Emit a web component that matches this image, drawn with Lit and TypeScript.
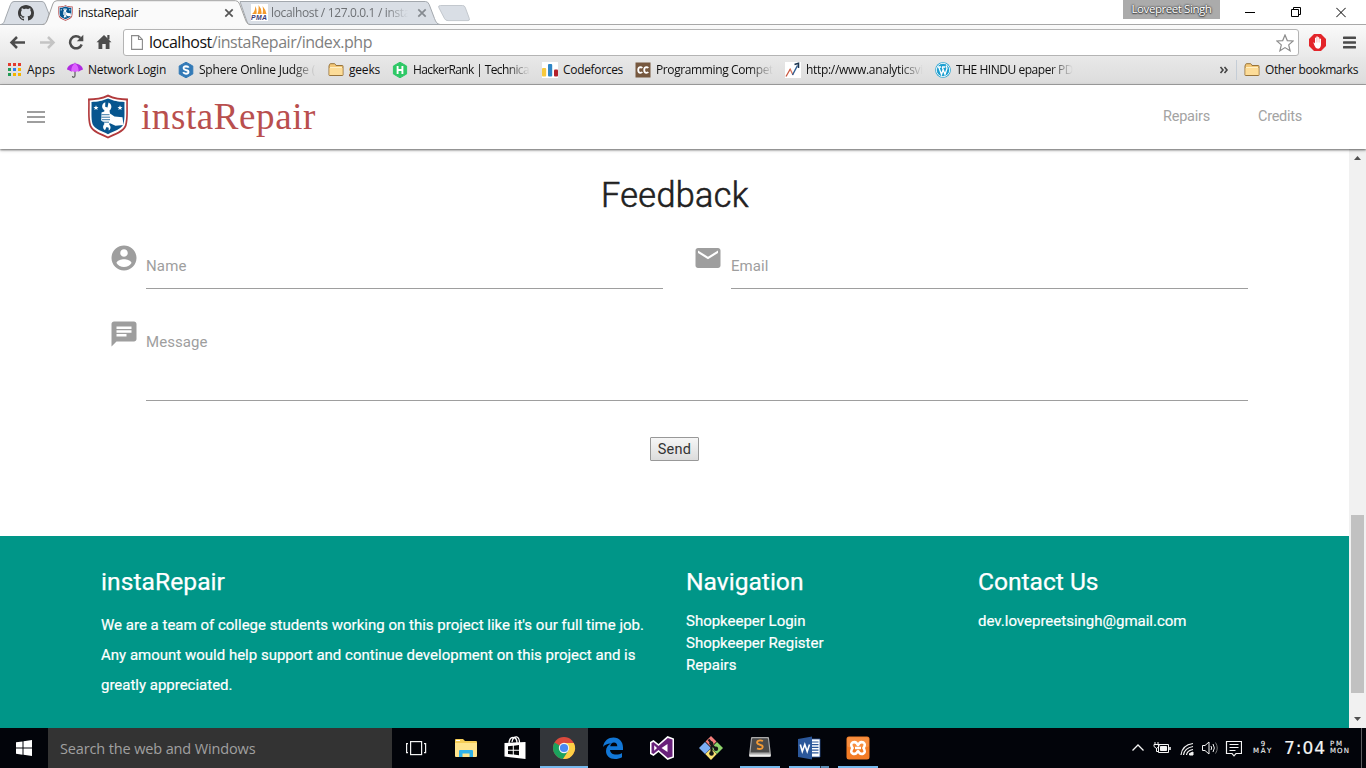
import { LitElement, html, css, svg } from "lit";
import { customElement, property, query } from "lit/decorators.js";

/** A single line of text whose tracking is adjusted to fill a given width. */
@customElement("fit-text")
class FitText extends LitElement {
  @property({ type: Number }) w = 0;
  @query("span") label!: HTMLSpanElement;
  static styles = css`
    :host { display: inline-block; white-space: nowrap; }
    span { display: inline-block; }
  `;
  render() {
    return html`<span><slot></slot></span>`;
  }
  firstUpdated() {
    const chars = (this.textContent ?? "").trim().length;
    const natural = this.label.getBoundingClientRect().width;
    if (chars > 0 && this.w > 0) {
      this.label.style.letterSpacing = `${(this.w - natural) / chars}px`;
    }
  }
}

const shield = (size: number, h: number) => html`
  <svg width=${size} height=${h} viewBox="0 0 42 45" preserveAspectRatio="none">
    <path d="M21 .5C27 3.500 34 4.500 41 4.500C40.500 14 41.800 24 39.500 32C37 38.500 28 41 21 44.500C14 41 5 38.500 2.500 32C.2 24 1.500 14 1 4.500C8 4.500 15 3.500 21 .5Z" fill="#b23a3c"/>
    <path d="M21 2.800C27 5.500 33 6.200 39.300 6.400C39 15 40 24 37.900 31.200C35.500 36.800 28 39 21 42.400C14 39 6.500 36.800 4.100 31.200C2 24 3 15 2.700 6.400C9 6.200 15 5.500 21 2.800Z" fill="#fff"/>
    <path d="M21 4.500C27 7 31 7.700 37.500 8C37.200 16 38.200 24 36.400 30.300C34 35.500 27 37 21 40.200C15 37 8 35.500 5.600 30.300C3.800 24 4.800 16 4.500 8C11 7.700 15 7 21 4.500Z" fill="#07568f"/>
    <path d="M16.500 9.200L18.300 8.200L18.200 12.800L20.500 13.600L21.500 8.500C25 10 25.300 14.500 22.500 16.500L23 19.500L27.500 22.500L35.500 23.300L36.500 31L28.500 31.800L22.500 29L22.200 30.500C24 32 24.200 35.500 21.700 36.500V33.800L19.500 33L18 36.300C15.500 34.500 15.800 31.500 17.300 30.300L17.100 28.500L14.200 26.500L14.500 18.500L17.300 17.500V16C14.500 14.500 14.700 10.800 16.500 9.200Z" fill="#fff"/>
    <path d="M14.500 20.700H22.500M14.500 23.200H23M15 25.700H23M16 28.200H22" stroke="#07568f" stroke-width=".8"/>
    <path d="M9 11.300L9.700 13H11.500L10.100 14.200L10.600 16L9 15L7.400 16L7.900 14.200L6.500 13H8.300Z M33 11.300L33.700 13H35.500L34.100 14.200L34.600 16L33 15L31.400 16L31.900 14.200L30.500 13H32.300Z" fill="#fff"/>
  </svg>`;

const tabShapes = html`
  <svg class="tabshapes" width="1366" height="25" viewBox="0 0 1366 25">
    <path d="M0 24.500H1366" stroke="#a8a8a8"/>
    <path d="M1 24.500C4 24 4.500 21 5.500 18L10.500 4.500Q11.700 1.500 14 1.500H42Q44 1.500 45 4L49 14L46 24.500Z" fill="#d9dee5" stroke="#a3a8ae"/>
    <path d="M240 1.500H425.500Q428 1.500 429.200 4.500L434.500 18.500C435.800 22 437 24 440 24.500H248Z" fill="#d9dee5" stroke="#a3a8ae"/>
    <path d="M42.500 25C46 24.500 46.800 21.500 48 18L52.800 4Q53.800 .7 57 .7H235.500Q238.300 .7 239.600 4L245 18.500C246.300 22 247 24.300 250.500 25Z" fill="#fafafa"/>
    <path d="M42.500 24.500C46 24.200 46.800 21.500 48 18L52.800 4Q53.800 .7 57 .7H235.500Q238.300 .7 239.600 4L245 18.500C246.300 22 247 24.300 250.500 24.500" fill="none" stroke="#a0a0a0"/>
    <path d="M440.500 5.500H462.500Q464.500 5.500 465.200 7.300L469.300 18.500Q470 20.600 468 20.600H448Q445.500 20.600 444.600 18.700L438.800 7.500Q438 5.500 440.500 5.500Z" fill="#d9dee5" stroke="#c3c8ce"/>
  </svg>`;

const cross = (color: string) => html`
  <svg width="10" height="10" viewBox="0 0 10 10"><path d="M1.300 1.300L8.700 8.700M8.700 1.300L1.300 8.700" stroke=${color} stroke-width="1.700"/></svg>`;

const github = html`
  <svg width="16" height="16" viewBox="0 0 16 16"><path fill="#3c3c3c" d="M8 0C3.580 0 0 3.580 0 8c0 3.540 2.290 6.530 5.470 7.590.4.070.55-.17.55-.38 0-.19-.01-.82-.01-1.490-2.010.37-2.530-.49-2.690-.94-.09-.23-.48-.94-.82-1.130-.28-.15-.68-.52-.01-.53.63-.01 1.080.58 1.230.82.72 1.210 1.870.87 2.330.66.070-.52.28-.87.51-1.070-1.780-.2-3.640-.89-3.640-3.950 0-.87.31-1.590.82-2.150-.08-.2-.36-1.020.08-2.120 0 0 .67-.21 2.200.82.64-.18 1.320-.27 2-.27s1.360.09 2 .27c1.530-1.040 2.200-.82 2.200-.82.44 1.100.16 1.920.08 2.120.51.56.82 1.270.82 2.150 0 3.070-1.870 3.750-3.650 3.950.29.25.54.73.54 1.480 0 1.070-.01 1.930-.01 2.200 0 .21.15.46.55.38A8.010 8.010 0 0 0 16 8c0-4.420-3.580-8-8-8z"/></svg>`;

const folder = html`
  <svg width="16" height="16" viewBox="0 0 16 16">
    <path d="M1 4V13Q1 13.500 1.500 13.500H14.500Q15 13.500 15 13V4.200Q15 3.500 14.500 3.500H8L7.300 2.200Q7 1.700 6.500 1.700H2.500Q1.800 1.700 1.700 2.300Z" fill="#f4c878" stroke="#97733a"/>
    <path d="M1.500 6H14.500V13H1.500Z" fill="#fcdc98"/><path d="M2 5.500H14" stroke="#fff0c4"/>
  </svg>`;

const bmIcons: Record<string, unknown> = {
  apps: html`<svg width="16" height="16" viewBox="0 0 16 16">
    <g fill="#e33b2e"><path d="M2 1h3v3H2zM7 1h3v3H7zM12 1h3v3h-3z"/></g>
    <path fill="#239b56" d="M2 6h3v3H2zM2 11h3v3H2z"/><path fill="#2d7ff0" d="M7 6h3v3H7z"/>
    <path fill="#f4b400" d="M12 6h3v3h-3zM7 11h3v3H7zM12 11h3v3h-3z"/></svg>`,
  umbrella: html`<svg width="16" height="16" viewBox="0 0 16 16">
    <path d="M8 7V13.500Q8 15.300 6.500 15.300Q5.500 15.200 5.500 14" stroke="#666" stroke-width="1.300" fill="none"/>
    <path d="M0 7.500C.5 4 3.500 2 7.500 1.500L8 .3L8.500 1.500C12.500 2 15.500 4 16 7.500L13.500 8.500L11.800 9.500L10 9L8 10L6 9L4.200 9.500L2.500 8.500Z" fill="#b02be0"/>
    <path d="M4.200 9.500C4.500 4.500 6 2.500 8 1.500C10 2.500 11.500 4.500 11.800 9.500L10 9L8 10L6 9Z" fill="#dd62ff"/></svg>`,
  sphere: html`<svg width="16" height="16" viewBox="0 0 16 16"><path d="M8 .2L14.800 4V12L8 15.800L1.200 12V4Z" fill="#337ab7" stroke="#337ab7" stroke-linejoin="round"/>
    <path d="M10.700 5.600Q10 4.300 8 4.300Q5.500 4.400 5.600 6.200Q5.700 7.500 8 8Q10.600 8.500 10.500 10Q10.400 11.700 8 11.700Q5.900 11.700 5.200 10.200" fill="none" stroke="#fff" stroke-width="1.900"/></svg>`,
  folder,
  hacker: html`<svg width="16" height="16" viewBox="0 0 16 16"><path d="M8 .2L14.600 4V12L8 15.800L1.400 12V4Z" fill="#2ec866" stroke="#2ec866" stroke-linejoin="round"/>
    <path d="M5.600 4V12M10.400 4V12M5.600 8H10.400" stroke="#fff" stroke-width="1.900"/></svg>`,
  forces: html`<svg width="16" height="16" viewBox="0 0 16 16"><path d="M0 0H16V16H0Z" fill="#fff"/><rect x="0" y="6" width="4.200" height="8.500" rx="1" fill="#f8c93c"/><rect x="6" y="2" width="4.200" height="12.500" rx="1" fill="#2f86c6"/><rect x="12" y="7.500" width="4" height="7" rx="1" fill="#b3202a"/></svg>`,
  chef: html`<svg width="16" height="16" viewBox="0 0 16 16"><path d="M.5 .5H15.500V15.500H.5Z" fill="#76583f"/><path d="M7.300 6Q6.600 5.200 5.400 5.200Q3.200 5.300 3.200 8Q3.200 10.700 5.400 10.800Q6.600 10.800 7.300 10M13.300 6Q12.600 5.200 11.400 5.200Q9.200 5.300 9.200 8Q9.200 10.700 11.400 10.800Q12.600 10.800 13.300 10" stroke="#fff" stroke-width="1.800" fill="none"/></svg>`,
  chart: html`<svg width="16" height="16" viewBox="0 0 16 16"><path d="M0 0H16V16H0Z" fill="#fff"/><path d="M1 14.500L5 7.500" stroke="#c9573f" stroke-width="1.300" fill="none"/><path d="M4.500 8L5.200 7.200L8 13" stroke="#d4705a" stroke-width="1.300" fill="none"/><path d="M7.500 13L12.500 3.500" stroke="#2c5b90" stroke-width="1.400" fill="none"/><path d="M9.500 2.500L13.500 1.200V6" stroke="#1c3550" stroke-width="1.500" fill="none"/></svg>`,
  wordpress: html`<svg width="16" height="16" viewBox="0 0 16 16"><circle cx="8" cy="8" r="7.800" fill="#1d9fd0"/><circle cx="8" cy="8" r="6.700" fill="none" stroke="#fff" stroke-width=".9"/><path d="M2.500 5H6M7 5H10.300M3.700 5L6.500 12.500L8.200 7.500M7.200 5L10 12.500L12 6.500Q11.800 4.500 11 3.500" stroke="#fff" stroke-width="1.300" fill="none"/></svg>`,
};

const bookmarks = [
  { icon: "apps", text: "Apps", w: 28, box: 28 },
  { icon: "umbrella", text: "Network Login", w: 78, box: 78 },
  { icon: "sphere", text: "Sphere Online Judge (", w: 116, box: 117, fade: true },
  { icon: "folder", text: "geeks", w: 31, box: 31 },
  { icon: "hacker", text: "HackerRank | Technica", w: 116, box: 117, fade: true },
  { icon: "forces", text: "Codeforces", w: 60, box: 60 },
  { icon: "chef", text: "Programming Compet", w: 117, box: 117, fade: true },
  { icon: "chart", text: "http://www.analyticsvi", w: 117, box: 117, fade: true },
  { icon: "wordpress", text: "THE HINDU epaper PD", w: 117, box: 117, fade: true },
];

const taskIcons = [
  { run: "", art: svg`<g fill="none" stroke="#f2f2f2" stroke-width="1.200"><rect x="9.600" y="9.600" width="11" height="13"/><path d="M7 11.600H5.600V20.600H7M23 11.600H24.600V20.600H23"/></g>` },
  { run: "", art: svg`<path d="M4 8Q4 7 5 7H12L14 9H25Q26 9 26 10V24H4Z" fill="#f5cd57"/><path d="M4 11H26V24Q26 25 25 25H5Q4 25 4 24Z" fill="#ffe48d"/><path d="M8 25V19Q8 18 9 18H21Q22 18 22 19V25H18.500V21.500H11.500V25Z" fill="#2fb1e8"/><path d="M5 8.500H9" stroke="#fff" stroke-width="1"/>` },
  { run: "", art: svg`<path d="M4.500 11L25.500 10V27L4.500 24.500Z" fill="#fff"/><path d="M9 12Q9 5.500 13 5.500Q17 5.500 17 11M12 10Q13 4.500 17 5Q19.500 6 19.500 11" fill="none" stroke="#fff" stroke-width="1.300"/><path d="M8 14.300L12.800 13.800V17.800H8ZM13.800 13.700L19 13.100V17.800H13.800ZM8 18.800H12.800V22.500L8 22ZM13.800 18.800H19V23.300L13.800 22.600Z" fill="#050608"/>` },
  { run: "full", art: svg`<circle cx="15" cy="16" r="11" fill="#db4a3d"/><path d="M15 16L5.500 10.500A11 11 0 0 0 14 27L19.700 18.700Z" fill="#1ba25d"/><path d="M15 11H24.800A11 11 0 0 1 14 27L19.500 18.500Z" fill="#fdcf45"/><circle cx="15" cy="16" r="5.200" fill="#f4f4f4"/><circle cx="15" cy="16" r="4.100" fill="#4a89f3"/>` },
  { run: "", art: svg`<path d="M5 15C6 8.500 10.500 5.500 15.500 5.500C21.500 5.500 25 10 25 15.500V18H12C12.300 21 15 22.600 18 22.600C20.500 22.600 22.500 22 24 21V25.200C22 26.400 19.500 27 17 27C11.500 27 8 23.500 8 19C8 15.500 10 12.800 13 11.500C9.500 11.500 6.500 13 5 15ZM12.200 14.200H19.300C19.300 12 18 10.500 16 10.500C14 10.500 12.600 12 12.200 14.200Z" fill="#1277d6"/>` },
  { run: "", art: svg`<path d="M3 10L6.500 8L11.500 12L20.500 4L27 6.500V25.500L20.500 28L11.500 20L6.500 24L3 22Z" fill="#fff"/><path d="M4.500 11L6.500 10L11.500 14L20.800 6L25.500 7.500V24.500L20.800 26L11.500 18L6.500 22L4.500 21Z" fill="#68217a"/><path d="M7.200 13.200L10 16L7.200 18.800ZM20.500 12V20L14.500 16Z" fill="#fff"/>` },
  { run: "", art: svg`<path d="M15 4L20.500 9.500L15 15L9.500 9.500Z" fill="#f57e7b"/><path d="M21 10L27 16L21 22L15 16Z" fill="#8ed36a"/><path d="M15 16.500L20.800 22L15 28L9.200 22Z" fill="#fbe272"/><path d="M9 10L15 16L9 22L3 16Z" fill="#7caef5"/><path d="M12.500 7.500L15.500 11V22M15.500 12.500L20 17" stroke="#161616" stroke-width="2.100" fill="none"/><circle cx="15.300" cy="11.300" r="2" fill="#161616"/><circle cx="20" cy="16.700" r="2.200" fill="#161616"/><circle cx="15.500" cy="21.500" r="2.300" fill="#161616"/>` },
  { run: "on", art: svg`<path d="M6 6Q6 5 7 5H23Q24 5 24 6L26 23Q26 25 24.500 25H5.500Q4 25 4 23Z" fill="#aaa"/><path d="M7 7Q7 6.200 8 6.200H22Q23 6.200 23 7L24.500 20.500H5.500Z" fill="#4b4b4b"/><path d="M4.300 22.500H25.700L25.500 24.500H4.500Z" fill="#eee"/><path d="M18 9Q15 7.700 12.800 9Q11.300 10.700 13 12L17 13.500Q18.500 15 16.800 16.500Q14.500 17.600 12 16.300" stroke="#f49b35" stroke-width="1.900" fill="none"/>` },
  { run: "on word", art: svg`<path d="M16 7H26V25H16Z" fill="#fff" stroke="#2b579a" stroke-width=".8"/><path d="M17 10H24.500M17 12.700H24.500M17 15.400H24.500M17 18.100H24.500M17 20.800H24.500" stroke="#2b579a" stroke-width="1.200"/><path d="M4 7L18 4.500V27.500L4 25Z" fill="#2b579a"/><path d="M6.300 12.500L8.300 19.500L10.800 12.500L13.200 19.500L15.500 12.500" stroke="#fff" stroke-width="1.600" fill="none"/>` },
  { run: "on", art: svg`<rect x="3.500" y="4.500" width="23" height="23" rx="2.500" fill="#f47c25"/><rect x="4.200" y="5.200" width="21.600" height="10" rx="2" fill="#f88f40"/><path d="M9.500 10.500Q12 9.500 13.500 11Q14.500 13 15 13Q15.500 13 16.500 11Q18 9.500 20.500 10.500Q23 12 20.500 16Q23 20 20.500 21.500Q18 22.500 16.500 21Q15.500 19 15 19Q14.500 19 13.500 21Q12 22.500 9.500 21.500Q7 20 9.500 16Q7 12 9.500 10.500ZM12 16H18" fill="none" stroke="#fff" stroke-width="2.600"/>` },
];

@customElement("app-root")
class AppRoot extends LitElement {
  static styles = css`
    :host { display: flex; flex-direction: column; width: 1366px; height: 768px; overflow: hidden; background: #fff; font-family: Roboto, "Liberation Sans", sans-serif; }
    * { box-sizing: border-box; }
    svg { display: block; flex: none; }
    .chrome { font-family: "Open Sans", "Noto Sans", sans-serif; height: 85px; flex: none; display: flex; flex-direction: column; color: #111; font-size: 12px; }
    .tabs { position: relative; height: 25px; flex: none; display: flex; align-items: center; background: #fff; }
    .tabshapes { position: absolute; left: 0; top: 0; }
    .tab { position: relative; display: flex; align-items: center; height: 25px; }
    .gh { width: 58px; padding-left: 18px; }
    .active { width: 193px; gap: 5px; }
    .active .title { flex: 1; }
    .active .x { margin-right: 17px; display: flex; }
    .second { width: 190px; color: #6e7175; gap: 3px; }
    .second .title { width: 140px; overflow: hidden; -webkit-mask-image: linear-gradient(90deg, #000 82%, transparent 98%); mask-image: linear-gradient(90deg, #000 82%, transparent 98%); }
    .second .x { margin-left: 3px; display: flex; }
    .pma { width: 17px; height: 17px; }
    .user { position: relative; margin-left: auto; width: 97px; height: 19px; align-self: flex-start; background: #ababab; color: #fff; text-align: center; line-height: 18px; font-size: 11.500px; text-shadow: 0 0 2px #333, 0 0 2px #444, 0 1px 1px #555; }
    .winctl { display: flex; gap: 35.500px; margin: 0 20px 0 25px; position: relative; width: 101px; }
    .toolbar { height: 32px; flex: none; display: flex; align-items: center; background: linear-gradient(#fafafa, #e9e9e9); }
    .tools { width: 123px; display: flex; padding: 2px 0 0 9px; gap: 13px; align-items: center; }
    .tools svg:nth-child(n+3) { margin-left: -1px; }
    .omni { width: 1176px; height: 27px; margin-top: 3px; background: #fff; border: 1px solid #b4b4b4; border-radius: 3px; display: flex; align-items: center; padding: 0 4px 0 7px; }
    .url { flex: 1; margin-left: 6px; font-size: 16px; line-height: 24px; color: #808080; margin-top: -1px; }
    .url b { font-weight: 400; color: #111; }
    .ext { display: flex; gap: 17px; margin: 2px 0 0 10px; align-items: center; }
    .marks { height: 28px; flex: none; background: linear-gradient(#e8e8e8, #dcdcdc); border-bottom: 1px solid #a5a5a5; display: flex; align-items: center; padding: 0 8px 2px 6px; gap: 12px; }
    .mark { display: flex; align-items: center; gap: 5px; line-height: 20px; }
    .mtext { overflow: hidden; white-space: nowrap; height: 20px; }
    .fade { -webkit-mask-image: linear-gradient(90deg, #000 80%, transparent 100%); mask-image: linear-gradient(90deg, #000 80%, transparent 100%); }
    .other { margin-left: auto; display: flex; align-items: center; gap: 7px; }
    .sep { width: 1px; height: 20px; background: #c5cdd6; }

    .nav { position: relative; height: 64px; flex: none; background: #fff; box-shadow: 0 1px 2px rgba(0,0,0,.5), 0 1px 4px rgba(0,0,0,.2); display: flex; align-items: center; padding-left: 24px; z-index: 2; }
    .shield { margin: -2px 0 0 39px; }
    .brand { font-family: "Liberation Serif", serif; font-size: 37px; color: #b94f4e; margin: 0 0 0 12px; line-height: 64px; }
    .links { margin-left: auto; margin-right: 64px; display: flex; gap: 48px; font-size: 14.500px; color: #a3a3a3; padding-bottom: 1px; }

    .view { flex: 1; display: flex; min-height: 0; }
    .page { width: 1349px; display: flex; flex-direction: column; }
    .form { height: 387px; flex: none; padding: 26px 101px 0 109px; display: flex; flex-direction: column; }
    h4 { margin: 0; font-weight: 300; font-size: 34.200px; line-height: 40px; color: #212121; text-align: center; width: 1132px; height: 68px; -webkit-text-stroke: .6px #212121; }
    .row { display: grid; grid-template-columns: 554px 555px; gap: 30px; }
    .field { display: flex; gap: 7px; height: 46px; }
    .mail { gap: 8px; }
    .line { flex: 1; border-bottom: 1px solid #9e9e9e; font-size: 15px; color: #9e9e9e; line-height: 20px; padding-top: 13px; }
    .msg { height: 82px; margin: 30px 0 36px; width: 1139px; }
    .send { width: 49px; height: 24px; margin-left: 541px; border: 1px solid #989898; border-radius: 1px; background: linear-gradient(#f6f6f6, #dcdcdc); font-size: 14.500px; line-height: 23px; color: #333; text-align: center; }
    .footer { flex: 1; background: #009688; color: #fff; padding: 29px 101px 0; display: grid; grid-template-columns: 585px 292px 1fr; }
    h5 { margin: 0; font-size: 24.600px; font-weight: 400; line-height: 33px; height: 32px; -webkit-text-stroke: .25px #fff; }
    .about { line-height: 30px; font-size: 15px; margin-top: 13px; -webkit-text-stroke: .2px #fff; }
    .list { line-height: 22px; font-size: 15px; margin-top: 13px; -webkit-text-stroke: .2px #fff; }
    .about div, .list div { white-space: nowrap; }
    .scroll { width: 17px; background: #f1f1f1; display: flex; flex-direction: column; align-items: center; padding: 6px 0 5px; }
    .thumb { width: 13px; height: 178px; background: #c1c1c1; margin: 354px 0 auto; }

    .task { height: 40px; flex: none; background: #02040a; display: flex; align-items: stretch; }
    .start { width: 48px; display: grid; place-items: center; }
    .search { width: 344px; background: #333; color: #a0a0a0; font-family: "Open Sans", "Noto Sans", sans-serif; font-size: 14.500px; line-height: 41px; padding-left: 12px; }
    .apps { display: flex; gap: 1px; }
    .app { width: 48px; height: 40px; padding-top: 4px; display: flex; flex-direction: column; align-items: center; justify-content: space-between; }
    .app:first-child { margin-right: 1px; }
    .full { background: #33363a; }
    .bar { height: 2px; width: 40px; }
    .full .bar { width: 48px; background: #76b9ed; }
    .on .bar { background: #76b9ed; }
    .word .bar { background: linear-gradient(90deg, #76b9ed 31px, #24394b 31px, #24394b 32px, #5b8eb6 32px); }
    .tray { margin-left: auto; display: flex; align-items: center; color: #f4f4f4; }
    .tiny { font-family: "DejaVu Sans", sans-serif; font-size: 7px; line-height: 7.500px; display: flex; flex-direction: column; align-items: center; -webkit-text-stroke: .1px #f4f4f4; }
    .date { margin: 0 11px; }
    .left { align-items: flex-start; margin-left: 4px; }
    .clock { font-family: "DejaVu Sans", sans-serif; font-size: 17px; line-height: 20px; -webkit-text-stroke: .2px #f4f4f4; }
    .desk { width: 1px; height: 40px; background: #5c5d60; margin: 0 4px 0 11px; }
  `;

  render() {
    return html`
      <div class="chrome">
        <div class="tabs">
          ${tabShapes}
          <div class="tab gh">${github}</div>
          <div class="tab active">
            ${shield(15, 16)}
            <div class="title"><fit-text w="60">instaRepair</fit-text></div>
            <div class="x">${cross("#555")}</div>
          </div>
          <div class="tab second">
            <svg class="pma" viewBox="0 0 17 17"><path d="M0 0H17V17H0Z" fill="#fff"/><path d="M1 10Q4 8 4.500 2Q6 6 5.500 10ZM6.500 10Q8 6 7.500 1Q11 5 10.500 10ZM11.500 10Q12.500 6 11.500 2Q15 6 15.500 10Z" fill="#f39a2b"/><text x="0" y="16.300" font-family="Liberation Sans" font-size="6.800" font-weight="700" font-style="italic" fill="#3b3b78" textLength="16">PMA</text></svg>
            <div class="title"><fit-text w="139">localhost / 127.0.0.1 / insta</fit-text></div>
            <div class="x">${cross("#858a90")}</div>
          </div>
          <div class="user"><fit-text w="80">Lovepreet Singh</fit-text></div>
          <div class="winctl">
            <svg width="10" height="11" viewBox="0 0 10 11"><path d="M0 5.500H10" stroke="#000"/></svg>
            <svg width="10" height="11" viewBox="0 0 10 11"><path d="M.5 2.500H7.500V9.500H.5ZM2.500 2.500V.5H9.500V7.500H7.500" fill="none" stroke="#000"/></svg>
            <svg width="10" height="11" viewBox="0 0 10 11"><path d="M.3 .8L9.700 10.200M9.700 .8L.3 10.200" stroke="#000"/></svg>
          </div>
        </div>
        <div class="toolbar">
          <div class="tools">
            <svg width="17" height="16" viewBox="0 0 17 16"><path d="M2 8.500H16M8 3L2.500 8.500L8 14" fill="none" stroke="#4d4d4d" stroke-width="2.500"/></svg>
            <svg width="17" height="16" viewBox="0 0 17 16"><path d="M1 8.500H14.500M9 3L14.500 8.500L9 14" fill="none" stroke="#c4c4c4" stroke-width="2.500"/></svg>
            <svg width="16" height="16" viewBox="0 0 16 16"><path d="M13.700 10.500A6 6 0 1 1 12.300 4" fill="none" stroke="#4d4d4d" stroke-width="2.500"/><path d="M15.300 .8V7.300H8.800Z" fill="#4d4d4d"/></svg>
            <svg width="16" height="16" viewBox="0 0 16 16"><path d="M8 1L15.500 8.300H13.500V15H9.700V10H6.300V15H2.500V8.300H.5Z" fill="#4d4d4d"/><path d="M11.300 1H13.500V5.500H11.300Z" fill="#4d4d4d"/></svg>
          </div>
          <div class="omni">
            <svg width="12" height="15" viewBox="0 0 12 15"><path d="M.6 .6H7.500L11.400 4.500V14.400H.6ZM7.500 .6V4.500H11.400" fill="#fff" stroke="#8a8a8a" stroke-width="1.100"/></svg>
            <div class="url"><fit-text w="223"><b>localhost</b>/instaRepair/index.php</fit-text></div>
            <svg width="18" height="18" viewBox="0 0 18 18"><path d="M9 1L11.300 6.600L17.200 7L12.700 10.900L14.100 16.800L9 13.600L3.900 16.800L5.300 10.900L.8 7L6.700 6.600Z" fill="#fff" stroke="#8c8c8c" stroke-width="1.200"/></svg>
          </div>
          <div class="ext">
            <svg width="17" height="17" viewBox="0 0 17 17"><path d="M5 0H12L17 5V12L12 17H5L0 12V5Z" fill="#e3252a"/><path d="M4.300 8.500Q5.300 8 6 9.500V4Q6.700 3 7.300 4V2.800Q8.100 1.800 8.800 2.800V3.500Q9.600 2.600 10.300 3.700V5Q11.300 4 12 5V11Q11.500 14.500 9 14.700Q6.500 14.500 5.700 12Z" fill="#fff"/><path d="M7.400 4V8.500M8.900 3.500V8.500M10.400 4.500V8.500" stroke="#eda6a6" stroke-width=".5"/></svg>
            <svg width="13" height="13" viewBox="0 0 13 13"><path d="M1 1.800H12M1 6.500H12M1 11.200H12" stroke="#4a4a4a" stroke-width="2.600" stroke-linecap="round"/></svg>
          </div>
        </div>
        <div class="marks">
          ${bookmarks.map((b) => html`<div class="mark">${bmIcons[b.icon]}<div class="mtext ${b.fade ? "fade" : ""}" style="width:${b.box}px"><fit-text w=${b.w}>${b.text}</fit-text></div></div>`)}
          <div class="other">
            <svg width="10" height="8" viewBox="0 0 10 8"><path d="M1.500 1L4 4L1.500 7M5.500 1L8 4L5.500 7" fill="none" stroke="#444" stroke-width="1.600"/></svg>
            <div class="sep"></div>
            <div class="mark">${folder}<fit-text w="93">Other bookmarks</fit-text></div>
          </div>
        </div>
      </div>

      <div class="nav">
        <svg width="24" height="24" viewBox="0 0 24 24"><path d="M3 18h18v-2H3v2zm0-5h18v-2H3v2zm0-7v2h18V6H3z" fill="#9e9e9e"/></svg>
        <div class="shield">${shield(42, 45)}</div>
        <div class="brand"><fit-text w="175">instaRepair</fit-text></div>
        <div class="links"><fit-text w="47">Repairs</fit-text><fit-text w="44">Credits</fit-text></div>
      </div>

      <div class="view">
        <div class="page">
          <div class="form">
            <h4><fit-text w="148">Feedback</fit-text></h4>
            <div class="row">
              <div class="field">
                <svg width="30" height="30" viewBox="0 0 24 24"><path fill="#9e9e9e" d="M12 2C6.480 2 2 6.480 2 12s4.480 10 10 10 10-4.480 10-10S17.520 2 12 2zm0 3c1.660 0 3 1.340 3 3s-1.340 3-3 3-3-1.340-3-3 1.340-3 3-3zm0 14.200c-2.500 0-4.710-1.280-6-3.220.03-1.990 4-3.080 6-3.080 1.990 0 5.970 1.090 6 3.080-1.290 1.940-3.500 3.220-6 3.220z"/></svg>
                <div class="line"><fit-text w="40.500">Name</fit-text></div>
              </div>
              <div class="field mail">
                <svg width="30" height="30" viewBox="0 0 24 24"><path fill="#9e9e9e" d="M20 4H4c-1.100 0-1.990.9-1.990 2L2 18c0 1.100.9 2 2 2h16c1.100 0 2-.9 2-2V6c0-1.100-.9-2-2-2zm0 4l-8 5-8-5V6l8 5 8-5v2z"/></svg>
                <div class="line"><fit-text w="37.500">Email</fit-text></div>
              </div>
            </div>
            <div class="field msg">
              <svg width="30" height="30" viewBox="0 0 24 24"><path fill="#9e9e9e" d="M20 2H4c-1.100 0-1.990.9-1.990 2L2 22l4-4h14c1.100 0 2-.9 2-2V4c0-1.100-.9-2-2-2zM6 9h12v2H6V9zm8 5H6v-2h8v2zm4-6H6V6h12v2z"/></svg>
              <div class="line"><fit-text w="61.500">Message</fit-text></div>
            </div>
            <div class="send"><fit-text w="33.500">Send</fit-text></div>
          </div>
          <div class="footer">
            <div>
              <h5><fit-text w="124">instaRepair</fit-text></h5>
              <div class="about">
                <div><fit-text w="543">We are a team of college students working on this project like it's our full time job.</fit-text></div>
                <div><fit-text w="534.500">Any amount would help support and continue development on this project and is</fit-text></div>
                <div><fit-text w="131.500">greatly appreciated.</fit-text></div>
              </div>
            </div>
            <div>
              <h5><fit-text w="117.500">Navigation</fit-text></h5>
              <div class="list">
                <div><fit-text w="119.500">Shopkeeper Login</fit-text></div>
                <div><fit-text w="137.500">Shopkeeper Register</fit-text></div>
                <div><fit-text w="50.500">Repairs</fit-text></div>
              </div>
            </div>
            <div>
              <h5><fit-text w="120.500">Contact Us</fit-text></h5>
              <div class="list"><div><fit-text w="208.500">dev.lovepreetsingh@gmail.com</fit-text></div></div>
            </div>
          </div>
        </div>
        <div class="scroll">
          <svg width="7" height="6" viewBox="0 0 7 6"><path d="M0 5L3.500 1L7 5Z" fill="#505050"/></svg>
          <div class="thumb"></div>
          <svg width="7" height="6" viewBox="0 0 7 6"><path d="M0 0L3.500 4L7 0Z" fill="#505050"/></svg>
        </div>
      </div>

      <div class="task">
        <div class="start"><svg width="16" height="16" viewBox="0 0 16 16"><path d="M0 2.300L6.500 1.400V7.600H0ZM7.500 1.200L16 0V7.600H7.500ZM0 8.600H6.500V14.700L0 13.700ZM7.500 8.600H16V16L7.500 14.800Z" fill="#fff"/></svg></div>
        <div class="search"><fit-text w="195.500">Search the web and Windows</fit-text></div>
        <div class="apps">
          ${taskIcons.map((t) => html`<div class="app ${t.run}"><svg width="30" height="32" viewBox="0 0 30 32">${t.art}</svg><div class="bar"></div></div>`)}
        </div>
        <div class="tray">
          <svg width="110" height="20" viewBox="0 0 110 20" fill="none" stroke="#f4f4f4">
            <path d="M.5 12.500L6 7L11.500 12.500" stroke-width="1.300"/>
            <path d="M26.500 6.500H36.500V14.500H26.500Z"/><path d="M28.500 8.500H34.500V12.500H28.500Z" fill="#f4f4f4"/><path d="M38 9V12" stroke-width="1.600"/><path d="M23 4V6.500M26 4V6.500M22 6.500H27V8.500L24.500 10.500L22 8.500ZM24.500 10V13.500H27"/>
            <path d="M49 17Q50 7 61 5.500M51.500 17Q52.500 10 61 8.500M54.500 17Q55 12.500 61 11.500" stroke-width="1.200"/><path d="M57.500 17V15.500L61 14V17Z" fill="#f4f4f4"/>
            <path d="M70.500 7.500H73L77 4V16L73 12.500H70.500Z"/><path d="M79 8Q80.300 10 79 12M81 6Q83.700 10 81 14" /><path d="M83.500 4.500Q87 10 83.500 15.500" stroke="#777"/>
            <path d="M94.500 3.500H109.500V15.500H104L102 17.800L100 15.500H94.500Z" stroke-width="1.200"/><path d="M97.500 6.500H106.500M97.500 9.500H106.500M97.500 12.500H103.500"/>
          </svg>
          <div class="tiny date"><span>9</span><fit-text w="20">MAY</fit-text></div>
          <div class="clock"><fit-text w="42">7:04</fit-text></div>
          <div class="tiny left"><fit-text w="14">PM</fit-text><fit-text w="20">MON</fit-text></div>
          <div class="desk"></div>
        </div>
      </div>
    `;
  }
}
